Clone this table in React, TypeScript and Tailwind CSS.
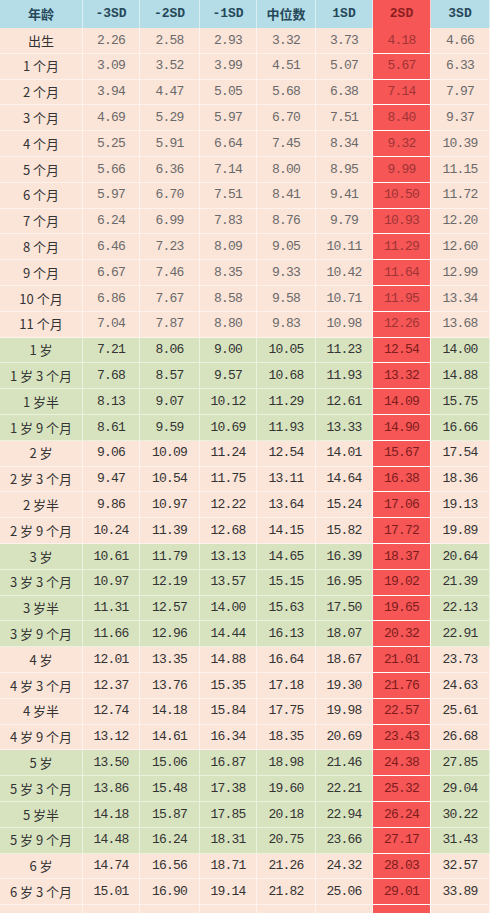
const rows: { age: string; v: string[]; green?: boolean }[] = [
  { age: "出生", v: ["2.26", "2.58", "2.93", "3.32", "3.73", "4.18", "4.66"] },
  { age: "1 个月", v: ["3.09", "3.52", "3.99", "4.51", "5.07", "5.67", "6.33"] },
  { age: "2 个月", v: ["3.94", "4.47", "5.05", "5.68", "6.38", "7.14", "7.97"] },
  { age: "3 个月", v: ["4.69", "5.29", "5.97", "6.70", "7.51", "8.40", "9.37"] },
  { age: "4 个月", v: ["5.25", "5.91", "6.64", "7.45", "8.34", "9.32", "10.39"] },
  { age: "5 个月", v: ["5.66", "6.36", "7.14", "8.00", "8.95", "9.99", "11.15"] },
  { age: "6 个月", v: ["5.97", "6.70", "7.51", "8.41", "9.41", "10.50", "11.72"] },
  { age: "7 个月", v: ["6.24", "6.99", "7.83", "8.76", "9.79", "10.93", "12.20"] },
  { age: "8 个月", v: ["6.46", "7.23", "8.09", "9.05", "10.11", "11.29", "12.60"] },
  { age: "9 个月", v: ["6.67", "7.46", "8.35", "9.33", "10.42", "11.64", "12.99"] },
  { age: "10 个月", v: ["6.86", "7.67", "8.58", "9.58", "10.71", "11.95", "13.34"] },
  { age: "11 个月", v: ["7.04", "7.87", "8.80", "9.83", "10.98", "12.26", "13.68"] },
  { age: "1 岁", v: ["7.21", "8.06", "9.00", "10.05", "11.23", "12.54", "14.00"], green: true },
  { age: "1 岁 3 个月", v: ["7.68", "8.57", "9.57", "10.68", "11.93", "13.32", "14.88"], green: true },
  { age: "1 岁半", v: ["8.13", "9.07", "10.12", "11.29", "12.61", "14.09", "15.75"], green: true },
  { age: "1 岁 9 个月", v: ["8.61", "9.59", "10.69", "11.93", "13.33", "14.90", "16.66"], green: true },
  { age: "2 岁", v: ["9.06", "10.09", "11.24", "12.54", "14.01", "15.67", "17.54"] },
  { age: "2 岁 3 个月", v: ["9.47", "10.54", "11.75", "13.11", "14.64", "16.38", "18.36"] },
  { age: "2 岁半", v: ["9.86", "10.97", "12.22", "13.64", "15.24", "17.06", "19.13"] },
  { age: "2 岁 9 个月", v: ["10.24", "11.39", "12.68", "14.15", "15.82", "17.72", "19.89"] },
  { age: "3 岁", v: ["10.61", "11.79", "13.13", "14.65", "16.39", "18.37", "20.64"], green: true },
  { age: "3 岁 3 个月", v: ["10.97", "12.19", "13.57", "15.15", "16.95", "19.02", "21.39"], green: true },
  { age: "3 岁半", v: ["11.31", "12.57", "14.00", "15.63", "17.50", "19.65", "22.13"], green: true },
  { age: "3 岁 9 个月", v: ["11.66", "12.96", "14.44", "16.13", "18.07", "20.32", "22.91"], green: true },
  { age: "4 岁", v: ["12.01", "13.35", "14.88", "16.64", "18.67", "21.01", "23.73"] },
  { age: "4 岁 3 个月", v: ["12.37", "13.76", "15.35", "17.18", "19.30", "21.76", "24.63"] },
  { age: "4 岁半", v: ["12.74", "14.18", "15.84", "17.75", "19.98", "22.57", "25.61"] },
  { age: "4 岁 9 个月", v: ["13.12", "14.61", "16.34", "18.35", "20.69", "23.43", "26.68"] },
  { age: "5 岁", v: ["13.50", "15.06", "16.87", "18.98", "21.46", "24.38", "27.85"], green: true },
  { age: "5 岁 3 个月", v: ["13.86", "15.48", "17.38", "19.60", "22.21", "25.32", "29.04"], green: true },
  { age: "5 岁半", v: ["14.18", "15.87", "17.85", "20.18", "22.94", "26.24", "30.22"], green: true },
  { age: "5 岁 9 个月", v: ["14.48", "16.24", "18.31", "20.75", "23.66", "27.17", "31.43"], green: true },
  { age: "6 岁", v: ["14.74", "16.56", "18.71", "21.26", "24.32", "28.03", "32.57"] },
  { age: "6 岁 3 个月", v: ["15.01", "16.90", "19.14", "21.82", "25.06", "29.01", "33.89"] },
  // next row only peeks in at the bottom edge, text falls below the fold
  { age: "", v: ["", "", "", "", "", "", ""] },
]

const headers = ["-3SD", "-2SD", "-1SD", "中位数", "1SD", "2SD", "3SD"]

const grid = "grid grid-cols-[83px_57px_60px_57px_59px_57px_58px_59px]"

export default function App() {
  return (
    <div className="h-[913px] w-[490px] overflow-hidden bg-[#fbe4d8] font-['Liberation_Mono','Noto_Sans_CJK_SC',monospace]">
      {/* header */}
      <div className={`${grid} h-[28px] bg-[#b5dde7] text-[13px] font-bold text-[#26485a]`}>
        <div className="flex items-center justify-center border-r border-white/50 font-['Noto_Sans_CJK_SC',sans-serif]">
          年龄
        </div>
        {headers.map((h, i) => (
          <div
            key={h}
            className={
              i === 5
                ? "flex items-center justify-center border-r border-white/70 bg-[#f65656] text-[#8a1f1f]"
                : i === 3
                  ? "flex items-center justify-center border-r border-white/50 font-['Noto_Sans_CJK_SC',sans-serif]"
                  : "flex items-center justify-center border-r border-white/50"
            }
          >
            {h}
          </div>
        ))}
      </div>

      {rows.map((r, ri) => (
        <div
          key={ri}
          className={`${grid} h-[25.8px] ${r.green ? "bg-[#d7e3bf]" : "bg-[#fbe4d8]"}`}
        >
          <div className="flex items-center justify-center border-r border-b border-white/50 font-['Noto_Sans_CJK_SC',sans-serif] text-[13px] text-[#333]">
            {r.age}
          </div>
          {r.v.map((v, i) => (
            <div
              key={i}
              className={
                i === 5
                  ? `flex items-center justify-center border-r border-b border-white bg-[#f65656] text-[13px] tracking-[-0.8px] ${ri < 12 ? "text-[#a03434]" : "text-[#7e1c1c]"}`
                  : `flex items-center justify-center border-r border-b border-white/50 text-[13px] tracking-[-0.8px] ${ri < 12 ? "text-[#6a6a6a]" : "text-[#333]"}`
              }
            >
              {v}
            </div>
          ))}
        </div>
      ))}
    </div>
  )
}
